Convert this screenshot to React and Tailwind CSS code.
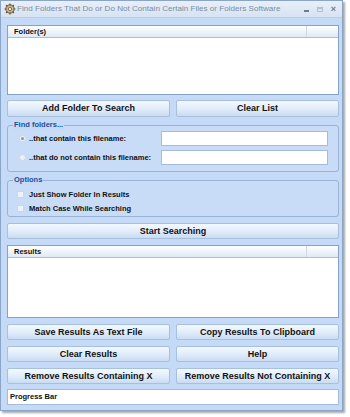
import React from "react";

const font = { fontFamily: '"Liberation Sans", Arial, sans-serif' };

function Btn({ children, className = "" }) {
  return (
    <div
      className={
        "h-[16px] flex items-center justify-center rounded-[2px] border border-[#a9c0dc] bg-gradient-to-b from-[#f3f8fe] via-[#e2edfb] to-[#c9dcf3] text-[9px] font-bold text-[#111] leading-none whitespace-nowrap " +
        className
      }
    >
      {children}
    </div>
  );
}

function ListBox({ title, h }) {
  return (
    <div className={"border border-[#86a3c5] bg-white flex flex-col " + h}>
      <div className="h-[12px] flex border-b border-[#a9bfdc] bg-gradient-to-b from-[#ffffff] to-[#dfe9f7]">
        <div className="w-[299px] border-r border-[#cfd9e6] pl-[6px] text-[7.5px] font-bold leading-[12px] text-[#111]">
          {title}
        </div>
      </div>
    </div>
  );
}

function Group({ label, className, children }) {
  return (
    <div className={"relative rounded-[3px] border border-[#98b3d6] bg-[#c8dcf7] " + className}>
      <span className="absolute left-[5px] top-[-6px] px-[1px] bg-[#c4daf6] text-[7.5px] font-bold leading-[10px] text-[#1d4f9a]">
        {label}
      </span>
      {children}
    </div>
  );
}

function Radio({ checked }) {
  return (
    <div className="w-[7px] h-[7px] rounded-full border border-[#cdd6e2] bg-[#eef2f7] flex items-center justify-center">
      {checked && <div className="w-[3px] h-[3px] rounded-full bg-[#8a94a2]" />}
    </div>
  );
}

function Check() {
  return <div className="w-[7px] h-[7px] border border-[#cdd6e2] bg-[#eef1f5]" />;
}

export default function App() {
  return (
    <div className="w-[350px] h-[417px] bg-white relative overflow-hidden" style={font}>
      <div className="w-[343px] h-[411px] border border-[#8aa5c6] bg-[#c4daf6] shadow-[2px_2px_2px_rgba(0,0,0,0.35)] flex flex-col">
        {/* Title bar */}
        <div className="h-[17px] flex items-center bg-gradient-to-b from-[#e9eff7] to-[#d6e3f3] border-b border-[#b9cde6] pl-[3px] pr-[4px]">
          <svg width="12" height="12" viewBox="0 0 12 12" className="shrink-0">
            <circle cx="6" cy="6" r="4.2" fill="#c9b48e" stroke="#6d5a3e" strokeWidth="1" />
            <circle cx="6" cy="6" r="1.6" fill="#f4efe4" stroke="#6d5a3e" strokeWidth="0.8" />
            <path d="M6 0.5v2M6 9.5v2M0.5 6h2M9.5 6h2M2 2l1.4 1.4M8.6 8.6L10 10M2 10l1.4-1.4M8.6 3.4L10 2" stroke="#6d5a3e" strokeWidth="1.2" />
          </svg>
          <div className="ml-[1px] text-[8.1px] text-[#7c8da3] whitespace-nowrap leading-none">
            Find Folders That Do or Do Not Contain Certain Files or Folders Software
          </div>
          <div className="flex-1" />
          <div className="flex items-center gap-[8px] mr-[2px]">
            <div className="w-[5px] h-[2px] bg-[#6f7d8e] mt-[3px]" />
            <div className="w-[6px] h-[5px] border border-[#b3bfcd] border-t-2" />
            <div className="text-[9px] text-[#6f7d8e] leading-none font-bold">×</div>
          </div>
        </div>

        {/* Content */}
        <div className="flex flex-col pl-[6px] pr-[3px]">
          <div className="mt-[7px]">
            <ListBox title="Folder(s)" h="h-[70px]" />
          </div>

          <div className="mt-[5px] grid grid-cols-2 gap-x-[6px]">
            <Btn className="h-[17px]">Add Folder To Search</Btn>
            <Btn className="h-[17px]">Clear List</Btn>
          </div>

          <Group label="Find folders..." className="mt-[8px] h-[47px]">
            <div className="flex flex-col pt-[5px] gap-[4px]">
              <div className="flex items-center h-[15px]">
                <div className="ml-[11px]"><Radio checked /></div>
                <span className="ml-[3px] text-[7.5px] font-bold text-[#111] leading-none w-[132px]">..that contain this filename:</span>
                <div className="w-[167px] h-[15px] bg-white border border-[#a5bcd8]" />
              </div>
              <div className="flex items-center h-[15px]">
                <div className="ml-[11px]"><Radio /></div>
                <span className="ml-[3px] text-[7.5px] font-bold text-[#111] leading-none w-[132px]">..that do not contain this filename:</span>
                <div className="w-[167px] h-[15px] bg-white border border-[#a5bcd8]" />
              </div>
            </div>
          </Group>

          <Group label="Options" className="mt-[8px] h-[37px]">
            <div className="flex flex-col pt-[9px] gap-[5px]">
              <div className="flex items-center h-[9px]">
                <div className="ml-[9px]"><Check /></div>
                <span className="ml-[5px] text-[7.5px] font-bold text-[#111] leading-none">Just Show Folder In Results</span>
              </div>
              <div className="flex items-center h-[9px]">
                <div className="ml-[9px]"><Check /></div>
                <span className="ml-[5px] text-[7.5px] font-bold text-[#111] leading-none">Match Case While Searching</span>
              </div>
            </div>
          </Group>

          <Btn className="mt-[6px]">Start Searching</Btn>

          <div className="mt-[6px]">
            <ListBox title="Results" h="h-[73px]" />
          </div>

          <div className="mt-[6px] grid grid-cols-2 gap-x-[6px] gap-y-[6px]">
            <Btn>Save Results As Text File</Btn>
            <Btn>Copy Results To Clipboard</Btn>
            <Btn>Clear Results</Btn>
            <Btn>Help</Btn>
            <Btn>Remove Results Containing X</Btn>
            <Btn>Remove Results Not Containing X</Btn>
          </div>

          <div className="mt-[5px] h-[16px] bg-white border border-[#a5bcd8] flex items-center pl-[2px] text-[7.5px] font-bold text-[#111] leading-none">
            Progress Bar
          </div>
        </div>
      </div>
    </div>
  );
}
